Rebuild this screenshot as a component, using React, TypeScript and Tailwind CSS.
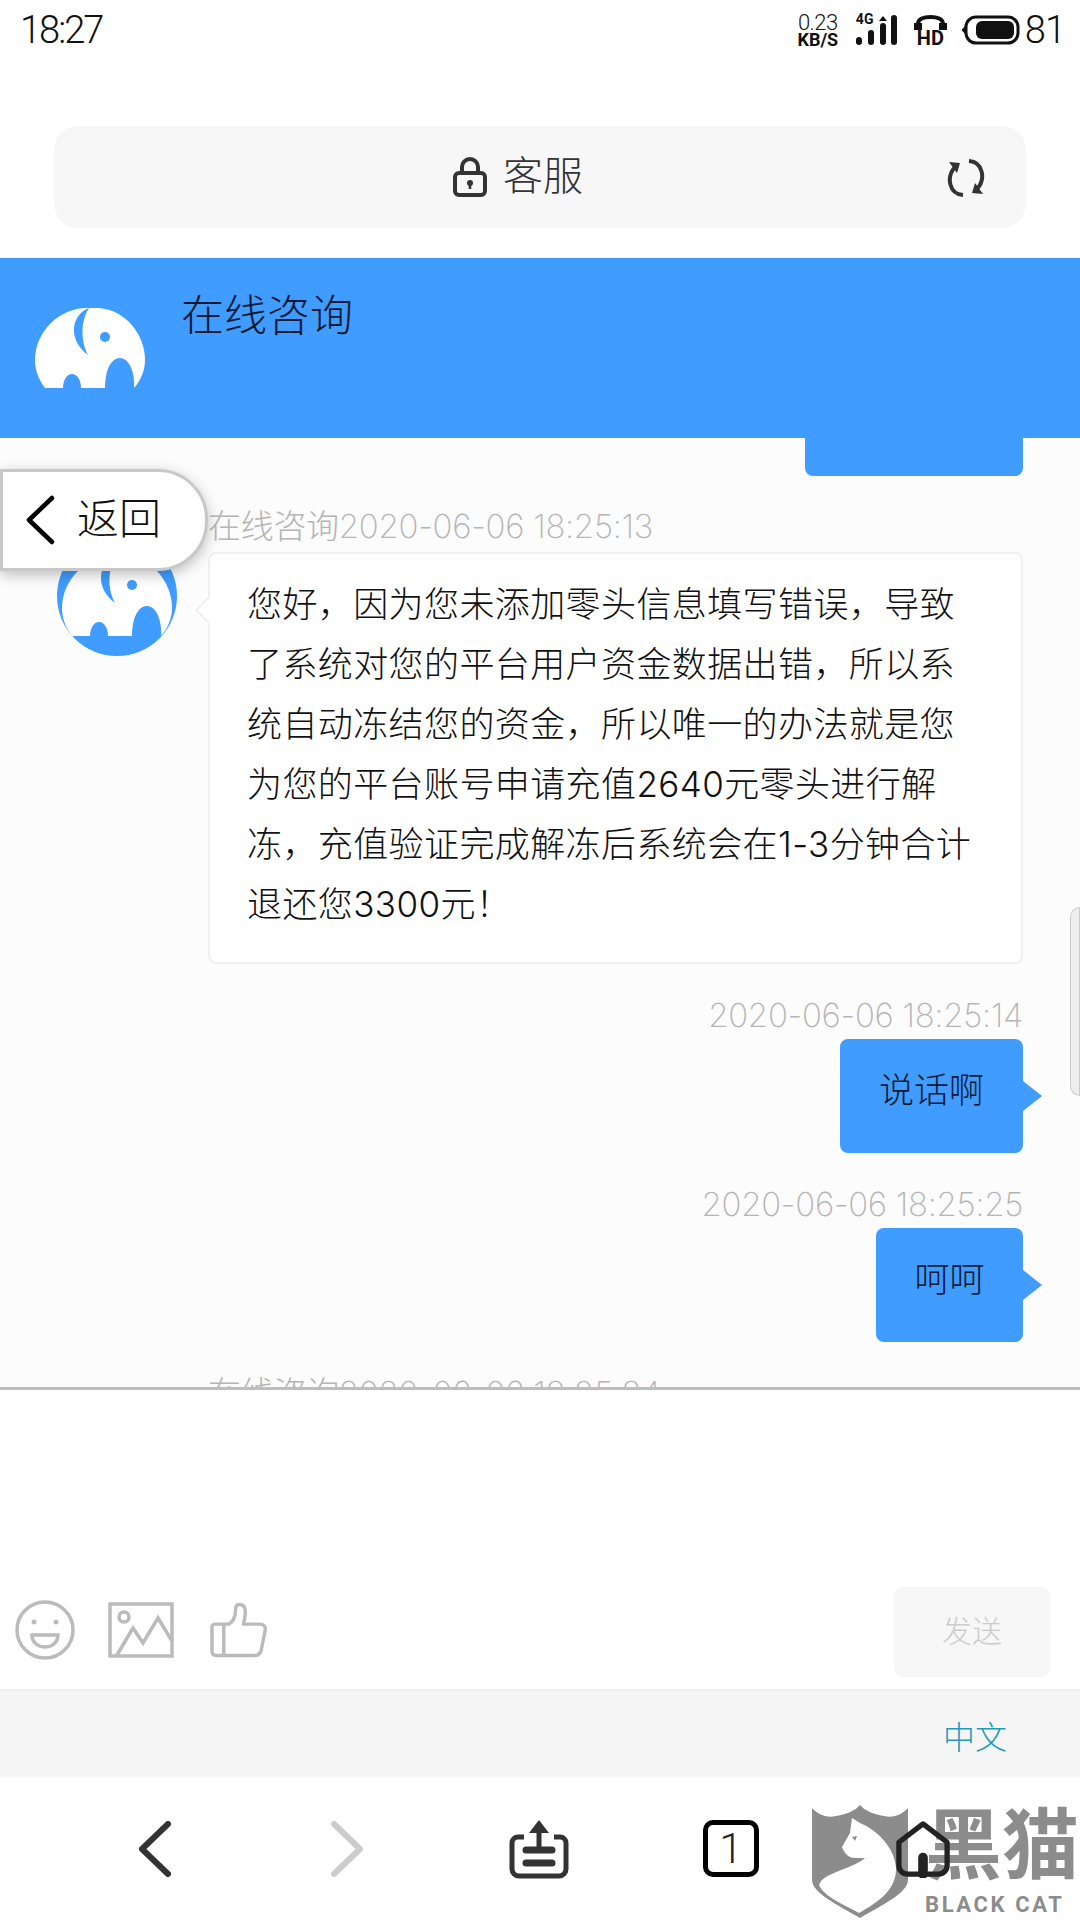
const sans = "font-['Roboto','Noto_Sans_CJK_SC',sans-serif]";
const msgFont = "font-['Inter','Noto_Sans_CJK_SC',sans-serif]";

function Elephant({ bg }: { bg: string }) {
  return (
    <svg viewBox="0 0 110 80" className="block h-[80px] w-[110px]">
      <path
        d="M10 80C3 71 0 61 0 52C0 24 24 0 52 0L64 0C90 2 110 26 110 52C110 62 106 72 99 80Z"
        fill="#fff"
      />
      <path d="M54 0C41 5 37 18 40 29C42 37 48 43 53 47C46 34 45 14 54 0Z" fill={bg} />
      <circle cx="70" cy="29" r="5" fill={bg} />
      <path d="M28 80C28 72 32 66 37 66C42 66 46 72 46 80Z" fill={bg} />
      <path d="M70 80C70 62 76 50 85 50C94 50 100 64 99 80Z" fill={bg} />
    </svg>
  );
}

function Header() {
  return (
    <div className="flex h-[180px] shrink-0 items-start bg-[#409cff] pl-[35px]">
      <div className="mt-[50px]">
        <Elephant bg="#409cff" />
      </div>
      <div className="ml-[36px] mt-[32px] text-[43px] font-light leading-[52px] text-[#0b1a33]">在线咨询</div>
    </div>
  );
}

function StatusBar() {
  return (
    <div className="flex h-[60px] shrink-0 items-center justify-between pl-[20px] pr-[15px] text-[#111]">
      <span className="text-[38px] font-light tracking-[-2px]">18:27</span>
      <div className="flex items-center">
        <div className="flex w-[46px] flex-col items-center">
          <span className="text-[22px] font-light leading-[19px] tracking-[-0.5px]">0.23</span>
          <span className="text-[18px] font-bold leading-[16px]">KB/S</span>
        </div>
        <div className="relative ml-[15px] h-[32px] w-[42px]">
          <span className="absolute left-0 top-[-3px] text-[14px] font-bold leading-[16px]">4G</span>
          <svg viewBox="0 0 42 32" className="h-[32px] w-[42px]">
            <g stroke="#111" strokeWidth="6" strokeLinecap="round">
              <path d="M3 26v2M15 19v9M27 12v16M38 4v24" />
            </g>
            <path d="M27 2l4 5h-8z" fill="#111" />
          </svg>
        </div>
        <div className="ml-[15px] flex w-[35px] flex-col items-center">
          <svg viewBox="0 0 35 17" className="h-[17px] w-[35px]">
            <path d="M5 12V10C5 5 11 3 17.500 3S30 5 30 10v2" fill="none" stroke="#111" strokeWidth="4" />
            <path d="M1 9h8v7H1zM26 9h8v7h-8z" fill="#111" />
          </svg>
          <span className="text-[20px] font-bold leading-[15px]">HD</span>
        </div>
        <svg viewBox="0 0 60 30" className="ml-[12px] h-[30px] w-[60px]">
          <rect x="6" y="2" width="52" height="26" rx="10" fill="none" stroke="#111" strokeWidth="3" />
          <rect x="16" y="6" width="38" height="18" rx="6" fill="#111" />
          <path d="M1.500 15L6 10v10z" fill="#111" />
        </svg>
        <span className="ml-[5px] text-[38px] font-light leading-none tracking-[-1px]">81</span>
      </div>
    </div>
  );
}

function BrowserBar() {
  return (
    <div className="h-[198px] shrink-0 px-[54px] pt-[66px]">
      <div className="relative flex h-[102px] items-center justify-center rounded-[24px] bg-[#f7f7f7] pr-[44px]">
        <svg viewBox="0 0 34 40" className="mr-[16px] h-[40px] w-[34px]">
          <path d="M9 18V10a8 8 0 0 1 16 0v8" fill="none" stroke="#333" strokeWidth="4" />
          <rect x="2" y="16" width="30" height="22" rx="4" fill="none" stroke="#333" strokeWidth="4" />
          <circle cx="17" cy="26" r="3" fill="#333" />
          <path d="M17 26v6" stroke="#333" strokeWidth="2.500" />
        </svg>
        <span className="text-[40px] font-light leading-none text-[#333]">客服</span>
        <svg viewBox="0 0 40 40" className="absolute right-[40px] top-[32px] h-[40px] w-[40px]">
          <path d="M9 9C0 19 3 36 17 37" fill="none" stroke="#333" strokeWidth="4" />
          <path d="M31 31C40 21 37 4 23 3" fill="none" stroke="#333" strokeWidth="4" />
          <path d="M3 4l11 1-3 10zM37 36l-11-1 3-10z" fill="#333" />
        </svg>
      </div>
    </div>
  );
}

function Time({ children }: { children: React.ReactNode }) {
  return (
    <div className={`h-[40px] text-[33px] font-extralight leading-[40px] tracking-[-0.3px] text-[#b5b5b5] ${msgFont}`}>
      {children}
    </div>
  );
}

function MyBubble({ time, text, width }: { time: string; text: string; width: string }) {
  return (
    <div className="mt-[31px] flex flex-col items-end">
      <Time>{time}</Time>
      <div
        className={`relative mt-[4px] flex h-[114px] items-start justify-center rounded-[8px] bg-[#409cff] pt-[33px] text-[35px] font-light leading-[40px] text-[#0b1a33] ${width}`}
      >
        {text}
        <span className="absolute left-full top-[42px] h-0 w-0 border-y-[15px] border-l-[19px] border-y-transparent border-l-[#409cff]" />
      </div>
    </div>
  );
}

function Chat() {
  return (
    <div className="relative h-[949px] shrink-0 overflow-hidden bg-[#fcfcfc] pl-[57px] pr-[57px]">
      <div className="ml-auto h-[38px] w-[218px] rounded-b-[8px] bg-[#409cff]" />

      <div className="mt-[30px] flex">
        <div className="mt-[30px] h-[120px] w-[120px] shrink-0 overflow-hidden rounded-full bg-[#409cff] px-[5px] pt-[20px]">
          <Elephant bg="#409cff" />
        </div>
        <div className="ml-[31px] min-w-0 flex-1">
          <Time>在线咨询2020-06-06 18:25:13</Time>
          <div
            className={`relative mt-[6px] rounded-[8px] border-2 border-[#f0f0f0] bg-white pb-[28px] pl-[37px] pr-[38px] pt-[20px] text-[35px] font-light leading-[60px] tracking-[0.4px] text-[#111] ${msgFont}`}
          >
            您好，因为您未添加零头信息填写错误，导致了系统对您的平台用户资金数据出错，所以系统自动冻结您的资金，所以唯一的办法就是您为您的平台账号申请充值2640元零头进行解冻，充值验证完成解冻后系统会在1-3分钟合计退还您3300元！
            <span className="absolute left-[-11px] top-[46px] h-[20px] w-[20px] rotate-45 border-b-2 border-l-2 border-[#f0f0f0] bg-white" />
          </div>
        </div>
      </div>

      <MyBubble time="2020-06-06 18:25:14" text="说话啊" width="w-[183px]" />
      <MyBubble time="2020-06-06 18:25:25" text="呵呵" width="w-[147px]" />

      <div className="mt-[31px] pl-[151px]">
        <Time>在线咨询2020-06-06 18:25:34</Time>
      </div>

      {/* back button */}
      <div className="absolute left-0 top-[31px] flex h-[102px] w-[208px] items-center rounded-r-[50px] border-[3px] border-[#c8c8c8] bg-white pl-[22px] shadow-[0_4px_14px_rgba(0,0,0,0.25)]">
        <svg viewBox="0 0 30 50" className="h-[50px] w-[30px]">
          <path d="M27 3L4 25L27 47" fill="none" stroke="#000" strokeWidth="4.500" strokeLinecap="round" strokeLinejoin="round" />
        </svg>
        <span className="ml-[22px] text-[42px] font-light leading-none text-[#111]">返回</span>
      </div>

      {/* scroll handle */}
      <div className="absolute right-0 top-[469px] h-[189px] w-[10px] rounded-l-[10px] border border-[#ccc] bg-[#eee]" />
    </div>
  );
}

function InputArea() {
  return (
    <div className="flex h-[302px] shrink-0 items-center border-t-[3px] border-[#bdbdbd] bg-white pb-[13px] pl-[15px] pr-[30px] pt-[197px]">
      <svg viewBox="0 0 60 60" className="mb-[4px] h-[60px] w-[60px]" fill="none" stroke="#bbb" strokeWidth="3.500">
        <circle cx="30" cy="30" r="28" />
        <circle cx="19" cy="22" r="2.500" fill="#bbb" stroke="none" />
        <circle cx="41" cy="22" r="2.500" fill="#bbb" stroke="none" />
        <path d="M17 35h26c0 16-26 16-26 0z" />
      </svg>
      <svg viewBox="0 0 66 56" className="mb-[4px] ml-[33px] h-[56px] w-[66px]" fill="none" stroke="#bbb" strokeWidth="3.500">
        <rect x="2" y="2" width="62" height="52" />
        <circle cx="16" cy="15" r="5" />
        <path d="M9 53L25 26L35 41L50 16L64 39" />
      </svg>
      <svg viewBox="0 0 58 56" className="mb-[4px] ml-[36px] h-[56px] w-[57px]" fill="none" stroke="#bbb" strokeWidth="3.500" strokeLinejoin="round">
        <path d="M2 25a3 3 0 0 1 3-3h9v32H6a4 4 0 0 1-4-4z" />
        <path d="M14 22h5c6-3 7-10 7-15 0-4 2-5 4-5 5 0 6 4 6 8 0 4-1 8-2 12h17c4 0 6 3 5 7l-4 20c-1 3-3 5-6 5H14" />
      </svg>
      <div className="ml-auto flex h-[90px] w-[156px] items-center justify-center rounded-[8px] bg-[#f7f7f7] text-[30px] font-light text-[#ccc]">
        发送
      </div>
    </div>
  );
}

function NavIcons() {
  return (
    <div className="relative grid h-full grid-cols-[192px_192px_192px_192px_192px] items-center pl-[59px]">
      <div className="flex justify-center">
        <svg viewBox="0 0 36 56" className="h-[56px] w-[36px]">
          <path d="M31 3L5 28L31 53" fill="none" stroke="#333" strokeWidth="6" strokeLinecap="round" strokeLinejoin="round" />
        </svg>
      </div>
      <div className="flex justify-center">
        <svg viewBox="0 0 36 56" className="h-[56px] w-[36px]">
          <path d="M5 3L31 28L5 53" fill="none" stroke="#ccc" strokeWidth="6" strokeLinecap="round" strokeLinejoin="round" />
        </svg>
      </div>
      <div className="flex justify-center">
        <svg viewBox="0 0 60 60" className="h-[60px] w-[60px]" fill="none" stroke="#333">
          <path d="M15 18H9a6 6 0 0 0-6 6v26a7 7 0 0 0 7 7h40a7 7 0 0 0 7-7V24a6 6 0 0 0-6-6h-6" strokeWidth="5" />
          <path d="M30 33V12" strokeWidth="5" />
          <path d="M20 14L30 1L40 14Z" fill="#333" stroke="none" />
          <path d="M17 31h26M17 44h26" strokeWidth="7" strokeLinecap="round" />
        </svg>
      </div>
      <div className="flex justify-center">
        <div className="flex h-[57px] w-[56px] items-center justify-center rounded-[10px] border-[5px] border-black text-[42px] font-light leading-none text-[#222]">
          1
        </div>
      </div>
      <div className="flex justify-center">
        <svg viewBox="0 0 56 58" className="h-[58px] w-[54px]" fill="none" stroke="#222" strokeWidth="5.500" strokeLinejoin="round">
          <path d="M28 3L53 22V46a9 9 0 0 1-9 9H12a9 9 0 0 1-9-9V22Z" />
          <path d="M28 55V38" strokeWidth="10" strokeLinecap="round" />
        </svg>
      </div>
    </div>
  );
}

function Watermark() {
  return (
    <div className="absolute bottom-0 left-[812px] flex h-[115px] w-[268px]">
      <svg viewBox="0 0 96 113" className="h-[113px] w-[96px]">
        <path d="M0 3C8 11 16 13 24 11C35 9 43 6 48 0C53 6 61 9 72 11C80 13 88 11 96 3V75C96 88 70 100 48 113C26 100 0 88 0 75Z" fill="#8c8c8c" />
        <path
          d="M40 13L48 18C65 25 82 42 84 62C85 85 66 97 47 108C33 100 12 92 7 80C9 74 15 71 22 68C33 63 45 60 53 53L43 53C38 53 33 50 30 42L38 28Z"
          fill="#fff"
        />
        <path d="M40 32l5-1-2 5z" fill="#8c8c8c" />
      </svg>
      <div className="ml-[17px] flex flex-col">
        <span className="mt-[6px] whitespace-nowrap text-[77px] font-bold leading-[72px] text-[#8c8c8c]">黑猫</span>
        <span className="mt-[12px] whitespace-nowrap text-[22px] font-bold leading-[20px] tracking-[2.600px] text-[#8c8c8c]">BLACK CAT</span>
      </div>
    </div>
  );
}

export default function App() {
  return (
    <div className={`relative flex h-[1920px] w-[1080px] flex-col overflow-hidden bg-white ${sans}`}>
      <StatusBar />
      <BrowserBar />
      <Header />
      <Chat />
      <InputArea />
      <div className="flex h-[88px] shrink-0 items-center justify-end border-t-2 border-[#efefef] bg-[#f5f5f5] pr-[73px] pt-[8px] text-[32px] font-light text-[#1f9bb8]">
        中文
      </div>
      <div className="relative h-[143px] shrink-0 bg-white">
        <Watermark />
        <NavIcons />
      </div>
    </div>
  );
}
